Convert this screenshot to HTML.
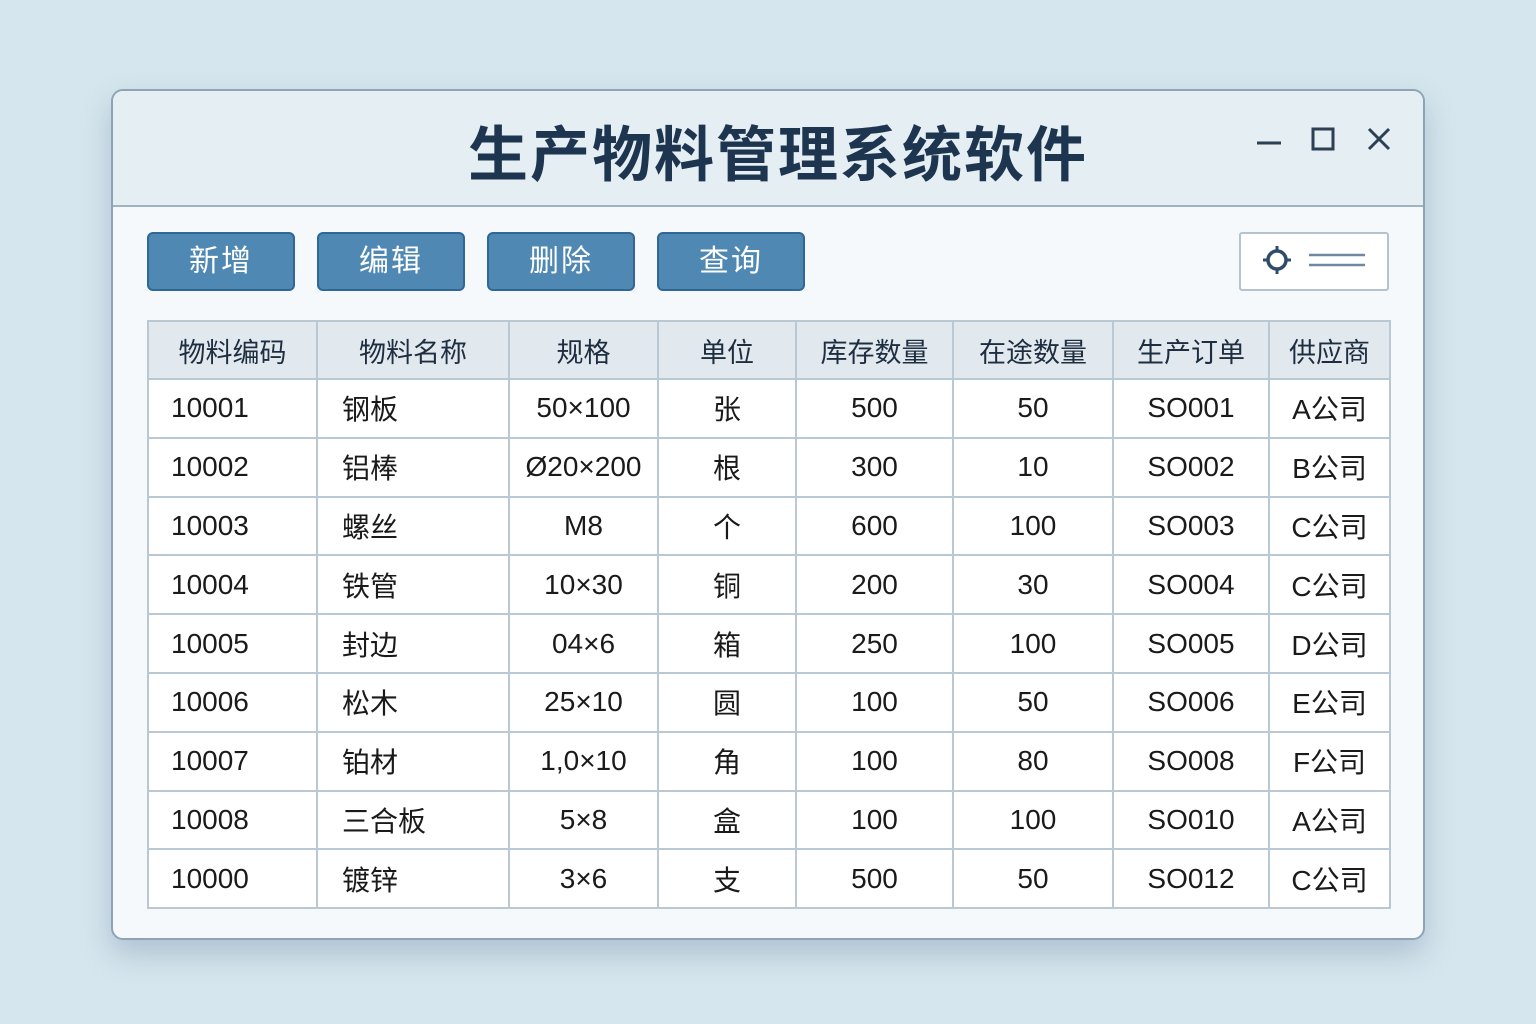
<!DOCTYPE html>
<html><head><meta charset="utf-8"><style>
*{margin:0;padding:0;box-sizing:border-box}
body{width:1536px;height:1024px;background:#d6e6ee;font-family:"Liberation Sans","Noto Sans CJK SC",sans-serif;position:relative;overflow:hidden}
.win{position:absolute;left:111px;top:89px;width:1314px;height:851px;border:2px solid #8ea4b6;border-radius:12px;background:#f6f9fb;box-shadow:0 14px 30px rgba(80,110,140,.3);overflow:hidden}
.tb{position:absolute;left:0;top:0;right:0;height:116px;background:#e4eef3;border-bottom:2px solid #9fb3c3}
.title{position:absolute;left:0;right:0;top:16px;text-align:center;font-size:60px;font-weight:bold;color:#1e3550;letter-spacing:2px;padding-left:20px}
.btn{position:absolute;top:141px;width:148px;height:59px;background:#4f88b3;border:2px solid #2f6796;border-radius:6px;color:#fff;font-size:30px;text-align:center;line-height:55px;letter-spacing:2px}
.set{position:absolute;left:1126px;top:141px;width:150px;height:59px;border:2px solid #b4c3cf;background:#fff;border-radius:3px}
table{position:absolute;left:34px;top:229px;border-collapse:collapse;font-size:28px;color:#1a1a1a}
td,th{border:2px solid #b9c8d3;height:58.8px;text-align:center;font-weight:normal;background:#fff}
th{background:#e1e9ef;height:58px;font-size:27px;color:#1e2e40}
td.l{text-align:left;padding-left:22px}
td.n{text-align:left;padding-left:24px}
</style></head><body>
<div class="win">
<div class="tb"><div class="title">生产物料管理系统软件</div>
<svg style="position:absolute;left:1140px;top:34px" width="140" height="30"><line x1="4" y1="18" x2="28" y2="18" stroke="#2b3f55" stroke-width="3"/><rect x="60" y="4" width="20" height="20" fill="none" stroke="#2b3f55" stroke-width="3"/><path d="M116 4 L136 24 M136 4 L116 24" stroke="#2b3f55" stroke-width="3"/></svg>
</div>
<div class="btn" style="left:34px">新增</div>
<div class="btn" style="left:204px">编辑</div>
<div class="btn" style="left:374px">删除</div>
<div class="btn" style="left:544px">查询</div>
<div class="set"><svg width="150" height="59"><circle cx="36" cy="26" r="9" fill="none" stroke="#2f4c6a" stroke-width="3.5"/><g stroke="#2f4c6a" stroke-width="3"><line x1="36" y1="12" x2="36" y2="16"/><line x1="36" y1="36" x2="36" y2="40"/><line x1="22" y1="26" x2="26" y2="26"/><line x1="46" y1="26" x2="50" y2="26"/></g><line x1="68" y1="21" x2="124" y2="21" stroke="#6f89a3" stroke-width="2.5"/><line x1="68" y1="31" x2="124" y2="31" stroke="#6f89a3" stroke-width="2.5"/></svg></div>
<table>
<colgroup><col style="width:169px"><col style="width:192px"><col style="width:149px"><col style="width:138px"><col style="width:157px"><col style="width:160px"><col style="width:156px"><col style="width:121px"></colgroup>
<tr><th>物料编码</th><th>物料名称</th><th>规格</th><th>单位</th><th>库存数量</th><th>在途数量</th><th>生产订单</th><th>供应商</th></tr>
<tr><td class="l">10001</td><td class="n">钢板</td><td>50×100</td><td>张</td><td>500</td><td>50</td><td>SO001</td><td>A公司</td></tr>
<tr><td class="l">10002</td><td class="n">铝棒</td><td>Ø20×200</td><td>根</td><td>300</td><td>10</td><td>SO002</td><td>B公司</td></tr>
<tr><td class="l">10003</td><td class="n">螺丝</td><td>M8</td><td>个</td><td>600</td><td>100</td><td>SO003</td><td>C公司</td></tr>
<tr><td class="l">10004</td><td class="n">铁管</td><td>10×30</td><td>铜</td><td>200</td><td>30</td><td>SO004</td><td>C公司</td></tr>
<tr><td class="l">10005</td><td class="n">封边</td><td>04×6</td><td>箱</td><td>250</td><td>100</td><td>SO005</td><td>D公司</td></tr>
<tr><td class="l">10006</td><td class="n">松木</td><td>25×10</td><td>圆</td><td>100</td><td>50</td><td>SO006</td><td>E公司</td></tr>
<tr><td class="l">10007</td><td class="n">铂材</td><td>1,0×10</td><td>角</td><td>100</td><td>80</td><td>SO008</td><td>F公司</td></tr>
<tr><td class="l">10008</td><td class="n">三合板</td><td>5×8</td><td>盒</td><td>100</td><td>100</td><td>SO010</td><td>A公司</td></tr>
<tr><td class="l">10000</td><td class="n">镀锌</td><td>3×6</td><td>支</td><td>500</td><td>50</td><td>SO012</td><td>C公司</td></tr>
</table>
</div>
</body></html>
